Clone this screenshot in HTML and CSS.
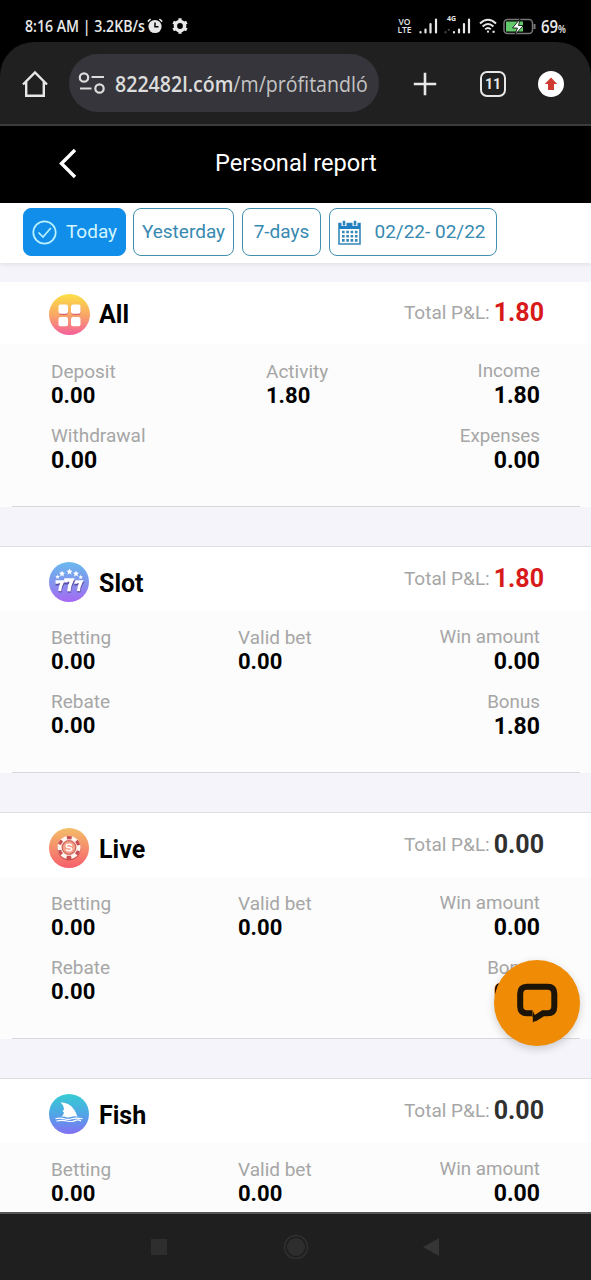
FILE: index.html
```html
<!DOCTYPE html>
<html lang="en">
<head>
<meta charset="utf-8">
<title>Personal report</title>
<link rel="stylesheet" href="styles.css">
</head>
<body>
<div class="phone">
  <div class="top">
    <div class="status">
      <div class="status-left">
        <span class="clock">8:16 AM | 3.2KB/s</span>
        <svg class="alarm" width="16" height="16" viewBox="0 0 16 16"><path d="M.8 3.6 3.6 1M15.200 3.600 12.400 1" stroke="#e8e8e8" stroke-width="1.500"/><circle cx="8" cy="8.500" r="6.600" fill="#e8e8e8"/><path d="M8 4.500V8.800H11.500" fill="none" stroke="#000" stroke-width="1.500"/></svg>
        <svg class="gear" width="16" height="16" viewBox="0 0 16 16"><circle cx="8" cy="8" r="4.600" fill="none" stroke="#e8e8e8" stroke-width="3.400"/><g stroke="#e8e8e8" stroke-width="3.200"><path d="M8 .2V3M8 13v2.800M1.200 4.100 3.700 5.500M12.300 10.500l2.500 1.400M1.200 11.900l2.500-1.400M12.300 5.500l2.500-1.400"/></g></svg>
      </div>
      <div class="status-right">
        <span class="volte"><span>VO</span><span>LTE</span></span>
        <svg class="signal" width="19" height="16" viewBox="0 0 19 16" stroke="#e8e8e8" stroke-width="2.200" stroke-linecap="round"><path d="M1.500 14.500v-.5M6.500 14.500v-3M11.500 14.500V6M17 14.500V1.500"/></svg>
        <span class="signal-4g"><span class="g4">4G</span><svg width="27" height="16" viewBox="0 0 27 16" stroke="#e8e8e8" stroke-width="2.200" stroke-linecap="round"><path d="M1.500 14.500v-.5M4.800 12v-.1" stroke="#444"/><path d="M10 14.500v-.5M15 14.500v-3M20 14.500V6M25 14.500V1.500"/></svg></span>
        <svg class="wifi" width="18" height="16" viewBox="0 0 18 16" fill="none" stroke="#e8e8e8" stroke-width="2"><path d="M1 5.500Q9-2 17 5.500M3.600 8.500Q9 3.500 14.400 8.500M6.200 11.300Q9 8.800 11.800 11.300"/><circle cx="9" cy="13.700" r="1.100" fill="#e8e8e8" stroke="none"/><path d="M13.500 13.800h2.200"/></svg>
        <svg class="battery" width="34" height="17" viewBox="0 0 34 17"><rect x="1" y="1.500" width="28.500" height="14" rx="3.500" fill="none" stroke="#777" stroke-width="1.500"/><path d="M3 3.500H20V13.500H3z" fill="#63c96a"/><path d="M31.500 6v5" stroke="#777" stroke-width="2"/><path d="M17 1 9.500 10h5L12 16.500 20.500 7.500H15.500z" fill="#fff" stroke="#000" stroke-width=".8"/></svg>
        <span class="percent">69<small>%</small></span>
      </div>
    </div>
    <div class="browser">
      <svg class="home" width="28" height="28" viewBox="0 0 28 28" fill="none" stroke="#e8e8e8" stroke-width="2.400"><path d="M2 14.500 14 2.500 26 14.500M5.200 12V25.800H22.800V12"/></svg>
      <div class="address">
        <svg class="tune" width="28" height="24" viewBox="0 0 28 24" fill="none" stroke="#dcdcdc" stroke-width="2.200"><circle cx="6" cy="6.500" r="4.200"/><path d="M13.500 6h12.500M2 17.500h11.500"/><circle cx="21.500" cy="17.500" r="4.200"/></svg>
        <div class="url-box"><span class="url"><b>822482l.cóm</b>/m/prófitandló</span></div>
      </div>
      <svg class="plus" width="24" height="24" viewBox="0 0 24 24" stroke="#e8e8e8" stroke-width="2.600"><path d="M12 .8V23.200M.8 12H23.200"/></svg>
      <span class="tab-count">11</span>
      <svg class="update" width="26" height="26" viewBox="0 0 26 26"><circle cx="13" cy="13" r="13" fill="#fff"/><path d="M13 6.500 19.200 13H16v6H10V13H6.800z" fill="#cf3b30"/></svg>
    </div>
  </div>

  <div class="titlebar">
    <svg class="back" width="19" height="31" viewBox="0 0 19 31" fill="none" stroke="#fff" stroke-width="3.400"><path d="M17 2 3.500 15.500 17 29"/></svg>
    <h1 class="page-title">Personal report</h1>
  </div>

  <div class="tabs">
    <div class="tab tab-today"><svg width="25" height="25" viewBox="0 0 25 25" fill="none" stroke="#b9f1ff" stroke-width="1.700"><circle cx="12.500" cy="12.500" r="11.200"/><path d="M6.500 12.500 11 17 18.800 8"/></svg><span>Today</span></div>
    <div class="tab tab-yesterday"><span>Yesterday</span></div>
    <div class="tab tab-week"><span>7-days</span></div>
    <div class="tab tab-range"><svg width="23" height="25" viewBox="0 0 23 25"><path d="M1 3.500H22V24H1z" fill="#fff" stroke="#3587b8" stroke-width="1.600"/><path d="M1 3.500H22V9H1z" fill="#1f7fc0"/><path d="M6 .5V6M17 .5V6" stroke="#fff" stroke-width="5"/><path d="M6 .8V5.500M17 .8V5.500" stroke="#2f86bd" stroke-width="2.600"/><path d="M4 12H19.500M4 16.200H19.500M4 20.400H19.500" stroke="#3587b8" stroke-width="2.600" stroke-dasharray="2.600 1.700"/></svg><span>02/22- 02/22</span></div>
  </div>

  <main class="content">
    <section class="card card-all">
      <header class="card-head">
        <svg class="icon" width="41" height="41" viewBox="0 0 41 41"><defs><linearGradient id="ga" x2="0" y2="1"><stop stop-color="#fce044"/><stop offset=".5" stop-color="#f9a865"/><stop offset="1" stop-color="#f4609b"/></linearGradient></defs><circle cx="20.500" cy="20.500" r="20.500" fill="url(#ga)"/><g fill="#d9656f"><rect x="10" y="12" width="9" height="9" rx="2"/><rect x="22.500" y="12" width="9" height="9" rx="2"/></g><g fill="#fff"><rect x="9.500" y="10.500" width="9.500" height="9.300" rx="2"/><rect x="22" y="10.500" width="9.500" height="9.300" rx="2"/><rect x="9.500" y="23" width="9.500" height="9.300" rx="2"/><rect x="22" y="23" width="9.500" height="9.300" rx="2"/></g></svg>
        <h2>All</h2>
        <div class="total"><span>Total P&amp;L:</span><b class="red">1.80</b></div>
      </header>
      <div class="card-body">
        <div class="cell"><span>Deposit</span><b>0.00</b></div>
        <div class="cell"><span>Activity</span><b>1.80</b></div>
        <div class="cell end"><span>Income</span><b>1.80</b></div>
        <div class="cell"><span>Withdrawal</span><b class="wide">0.00</b></div>
        <div class="cell"></div>
        <div class="cell end"><span>Expenses</span><b>0.00</b></div>
      </div>
    </section>

    <section class="card">
      <header class="card-head">
        <svg class="icon" width="40" height="40" viewBox="0 0 40 40"><defs><linearGradient id="gs" x2="0" y2="1"><stop stop-color="#68b9ee"/><stop offset=".55" stop-color="#8592ec"/><stop offset="1" stop-color="#a668f4"/></linearGradient><path id="star" d="M0-3 .9-.9 3-.8 1.400.7 2 3 0 1.800-2 3-1.400.7-3-.8-.9-.9z"/><g id="seven" fill="none"><path d="M1 4V2H6.500Q4 6 3.700 11" stroke="#5b4ba4" stroke-width="3.200" transform="translate(.3 1.200)"/><path d="M1 3.500V1.500H6.500Q4 6 3.700 11" stroke="#fff" stroke-width="3"/></g></defs><circle cx="20" cy="20" r="20" fill="url(#gs)"/><g fill="#fff"><use href="#star" x="8.500" y="14.800" transform="translate(2.500 4) scale(.72)"/><use href="#star" x="13" y="11.500"/><use href="#star" x="20.500" y="9.500"/><use href="#star" x="27" y="11.500"/><use href="#star" x="31.500" y="15" transform="translate(9 4.200) scale(.72)"/></g><use href="#seven" x="7" y="18.200"/><use href="#seven" x="25.700" y="18.200"/><use href="#seven" transform="translate(15.700 16.300) scale(1.120 1.180)"/></svg>
        <h2>Slot</h2>
        <div class="total"><span>Total P&amp;L:</span><b class="red">1.80</b></div>
      </header>
      <div class="card-body">
        <div class="cell"><span>Betting</span><b>0.00</b></div>
        <div class="cell"><span>Valid bet</span><b>0.00</b></div>
        <div class="cell end"><span>Win amount</span><b>0.00</b></div>
        <div class="cell"><span>Rebate</span><b>0.00</b></div>
        <div class="cell"></div>
        <div class="cell end"><span>Bonus</span><b>1.80</b></div>
      </div>
    </section>

    <section class="card">
      <header class="card-head">
        <svg class="icon" width="40" height="40" viewBox="0 0 40 40"><defs><linearGradient id="gl" x2="0" y2="1"><stop stop-color="#f3bd68"/><stop offset=".5" stop-color="#f68f6c"/><stop offset="1" stop-color="#f75f6c"/></linearGradient></defs><circle cx="20" cy="20" r="20" fill="url(#gl)"/><circle cx="20" cy="20.800" r="11.600" fill="#c94d4d"/><circle cx="20" cy="19.500" r="11.500" fill="#fff4ee"/><circle cx="20" cy="19.500" r="9.900" fill="none" stroke="#c84c50" stroke-width="3.200" stroke-dasharray="4.700 5.667" stroke-dashoffset="2.350" transform="rotate(30 20 19.500)"/><circle cx="20" cy="19.500" r="6.800" fill="#f7a08a" stroke="#d26a60" stroke-width="1.300"/><path d="M23 17.500Q22.200 16.300 20 16.300 17.300 16.300 17.300 17.900 17.300 19.500 20 19.500 22.700 19.600 22.700 21.100 22.700 22.700 20 22.700 18 22.700 17 21.500" fill="none" stroke="#fff" stroke-width="1.400"/></svg>
        <h2>Live</h2>
        <div class="total"><span>Total P&amp;L:</span><b>0.00</b></div>
      </header>
      <div class="card-body">
        <div class="cell"><span>Betting</span><b>0.00</b></div>
        <div class="cell"><span>Valid bet</span><b>0.00</b></div>
        <div class="cell end"><span>Win amount</span><b>0.00</b></div>
        <div class="cell"><span>Rebate</span><b>0.00</b></div>
        <div class="cell"></div>
        <div class="cell end"><span>Bonus</span><b>0.00</b></div>
      </div>
    </section>

    <section class="card">
      <header class="card-head">
        <svg class="icon" width="40" height="40" viewBox="0 0 40 40"><defs><linearGradient id="gf" x2="0" y2="1"><stop stop-color="#35ccd2"/><stop offset=".5" stop-color="#50a6e6"/><stop offset="1" stop-color="#8370f4"/></linearGradient></defs><circle cx="20" cy="20" r="20" fill="url(#gf)"/><path d="M11.500 8.500Q23.500 8 28.500 22.800Q25 21.800 22 23Q18 24.200 15.500 22.500L12.500 22.800Q14.500 21 15 18.500L13.500 17.300 15 15.500Q14.800 11 11.500 8.500z" fill="#fff"/><path d="M6.500 24.700Q11 23.500 15 24.700T23 24.700 33.500 24.700M7.500 27Q13 25.800 18 27T26 26.600 32 27" fill="none" stroke="#fff" stroke-width="1.200"/></svg>
        <h2>Fish</h2>
        <div class="total"><span>Total P&amp;L:</span><b>0.00</b></div>
      </header>
      <div class="card-body">
        <div class="cell"><span>Betting</span><b>0.00</b></div>
        <div class="cell"><span>Valid bet</span><b>0.00</b></div>
        <div class="cell end"><span>Win amount</span><b>0.00</b></div>
      </div>
    </section>
  </main>

  <nav class="navbar">
    <svg width="18" height="18" viewBox="0 0 18 18"><path d="M1 1H17V17H1z" fill="#2e2e2e"/></svg>
    <svg width="26" height="26" viewBox="0 0 26 26"><circle cx="13" cy="13" r="11.500" fill="none" stroke="#303030" stroke-width="1.500"/><circle cx="13" cy="13" r="9" fill="#2e2e2e"/></svg>
    <svg width="18" height="20" viewBox="0 0 18 20"><path d="M17 1V19L1 10z" fill="#353535"/></svg>
  </nav>

  <div class="chat">
    <svg width="42" height="42" viewBox="0 0 42 42"><path d="M16.500 31.300H11Q4.200 31.300 4.200 24.500V11.500Q4.200 4.700 11 4.700H31.500Q38.300 4.700 38.300 11.500V24.500Q38.300 31.300 31.500 31.300H27L18 37" fill="none" stroke="#1c1406" stroke-width="6"/><path d="M16.800 29V40.500L21 37.500z" fill="#1c1406"/></svg>
  </div>
</div>
</body>
</html>
```
FILE: styles.css
```css
* { box-sizing: border-box; }
body { margin: 0; font-family: Roboto, sans-serif; background: #000; }
.phone { position: relative; width: 591px; height: 1280px; display: flex; flex-direction: column; overflow: hidden; background: #f4f4fa; }

/* System status and browser toolbar */
.top { flex: none; height: 126px; background: #000; }
.status { height: 42px; padding: 10px 25px 0; display: flex; justify-content: space-between; color: #e8e8e8; font-family: "Open Sans", sans-serif; }
.status-left, .status-right { display: flex; align-items: center; height: 32px; }
.clock { width: 119px; font-size: 17px; font-weight: 600; line-height: 32px; white-space: nowrap; transform: scaleX(.83); transform-origin: left; }
.alarm { margin-left: 3px; }
.gear { margin-left: 9px; }
.volte { width: 15px; font: 600 8.5px/8.5px "Open Sans", sans-serif; display: flex; flex-direction: column; align-items: center; }
.signal { margin-left: 7px; }
.signal-4g { position: relative; margin-left: 6px; height: 16px; display: flex; }
.g4 { position: absolute; left: 3px; top: -3px; font: 700 7px/8px "Open Sans", sans-serif; }
.wifi { margin-left: 8px; }
.battery { margin-left: 6px; }
.percent { width: 25px; margin-left: 4px; font-size: 18px; font-weight: 600; white-space: nowrap; transform: scaleX(.83); transform-origin: left; }
.percent small { font-size: 11px; }
.browser { height: 84px; display: flex; align-items: center; padding: 2px 27px 0 21px; background: #202020; border-radius: 34px 34px 0 0; border-bottom: 2px solid #3c3c3c; }
.address { width: 310px; height: 58px; margin-left: 20px; margin-top: -3px; padding-left: 9px; border-radius: 29px; background: #35353b; display: flex; align-items: center; flex: none; }
.tune { flex: none; }
.url-box { width: 253px; margin-left: 9px; overflow: hidden; }
.url { display: inline-block; font: 500 22px/34px "Open Sans", sans-serif; white-space: nowrap; color: #c4c4c4; transform: scaleX(.89); transform-origin: left; }
.url b { font-weight: 600; color: #dcdcdc; }
.plus { margin-left: 34px; }
.tab-count { margin-left: 43px; width: 26px; height: 26px; border: 2.5px solid #e8e8e8; border-radius: 7px; color: #e8e8e8; font-size: 14px; line-height: 22px; font-weight: 700; text-align: center; }
.update { margin-left: auto; flex: none; }

/* Page title */
.titlebar { flex: none; height: 77px; padding: 0 0 3px 58px; display: flex; align-items: center; background: #000; color: #fff; }
.page-title { margin: 0 0 0 138px; font-size: 23.6px; line-height: 30px; font-weight: 400; white-space: nowrap; }

/* Date filters */
.tabs { flex: none; height: 60px; padding: 5px 23px 0; display: flex; background: #fff; box-shadow: 0 1px 5px rgba(0,0,0,.1); }
.tab { height: 48px; border: 1px solid #438fae; border-radius: 8px; display: flex; align-items: center; justify-content: center; color: #3689b0; font-size: 19px; white-space: nowrap; margin-right: 8px; }
.tab-today { width: 103px; background: #118eea; border-color: #118eea; color: #d3f5ff; gap: 9px; }
.tab-yesterday { width: 101px; margin-left: -1px; }
.tab-week { width: 79px; }
.tab-range { width: 168px; gap: 13px; margin-right: 0; padding-right: 2px; }
.tab span { line-height: 26px; }

/* Report cards */
.content { flex: 1; min-height: 0; overflow: hidden; padding-top: 19px; display: flex; flex-direction: column; gap: 39px; }
.card { flex: none; height: 227px; background: #fff; border-top: 1px solid #dedee2; }
.card-head { height: 64px; padding: 0 47px 0 49px; display: flex; }
.icon { margin-top: 15px; flex: none; }
.card-head h2 { margin: 22px 0 0 10px; font-size: 25px; line-height: 30px; font-weight: 700; }
.total { height: 30px; margin: 17px 0 0 auto; display: flex; align-items: center; gap: 4px; line-height: 30px; color: #a6a6a6; font-size: 19px; }
.total b { font-size: 25px; color: #303030; }
.total b.red { color: #d81a1a; }
.card-body { height: 162px; padding: 15px 0 0 51px; display: grid; grid-template-columns: 187px 120px 182px; grid-template-rows: 48px 48px; row-gap: 16px; background: linear-gradient(#d8d8dc, #d8d8dc) center bottom / 568px 1px no-repeat #fcfcfc; color: #000; }
.cell { display: flex; flex-direction: column; }
.cell span { font-size: 19px; line-height: 24px; color: #a6a6a6; white-space: nowrap; }
.cell b { font-size: 22px; line-height: 24px; }
.end { align-items: flex-end; }
.end b, .cell .wide { font-size: 23px; line-height: 26px; }
.end b { margin-top: -1px; }
.end:nth-child(6) { padding-top: 1px; }
.end span { position: relative; top: -1px; font-size: 18.8px; }
.card-all { height: 225px; border-top: 0; }
.card-all .card-head { height: 62px; }
.card-all .icon { margin-top: 12px; }
.card-all h2 { margin: 18px 0 0 9px; }
.card-all .total { margin-top: 16px; }
.card-all .card-body { height: 163px; padding-top: 16px; grid-template-columns: 215px 92px 182px; }

/* Android navigation */
.navbar { flex: none; height: 68px; border-top: 2px solid #555; background: #1f1f1f; display: flex; align-items: center; padding-left: 150px; gap: 115px; }
.navbar svg + svg + svg { margin-left: -2px; }

/* Floating chat button */
.chat { position: absolute; left: 494px; top: 960px; width: 86px; height: 86px; border-radius: 50%; background: #ef8b05; box-shadow: 0 3px 8px rgba(0,0,0,.18); display: flex; align-items: center; justify-content: center; }
```
